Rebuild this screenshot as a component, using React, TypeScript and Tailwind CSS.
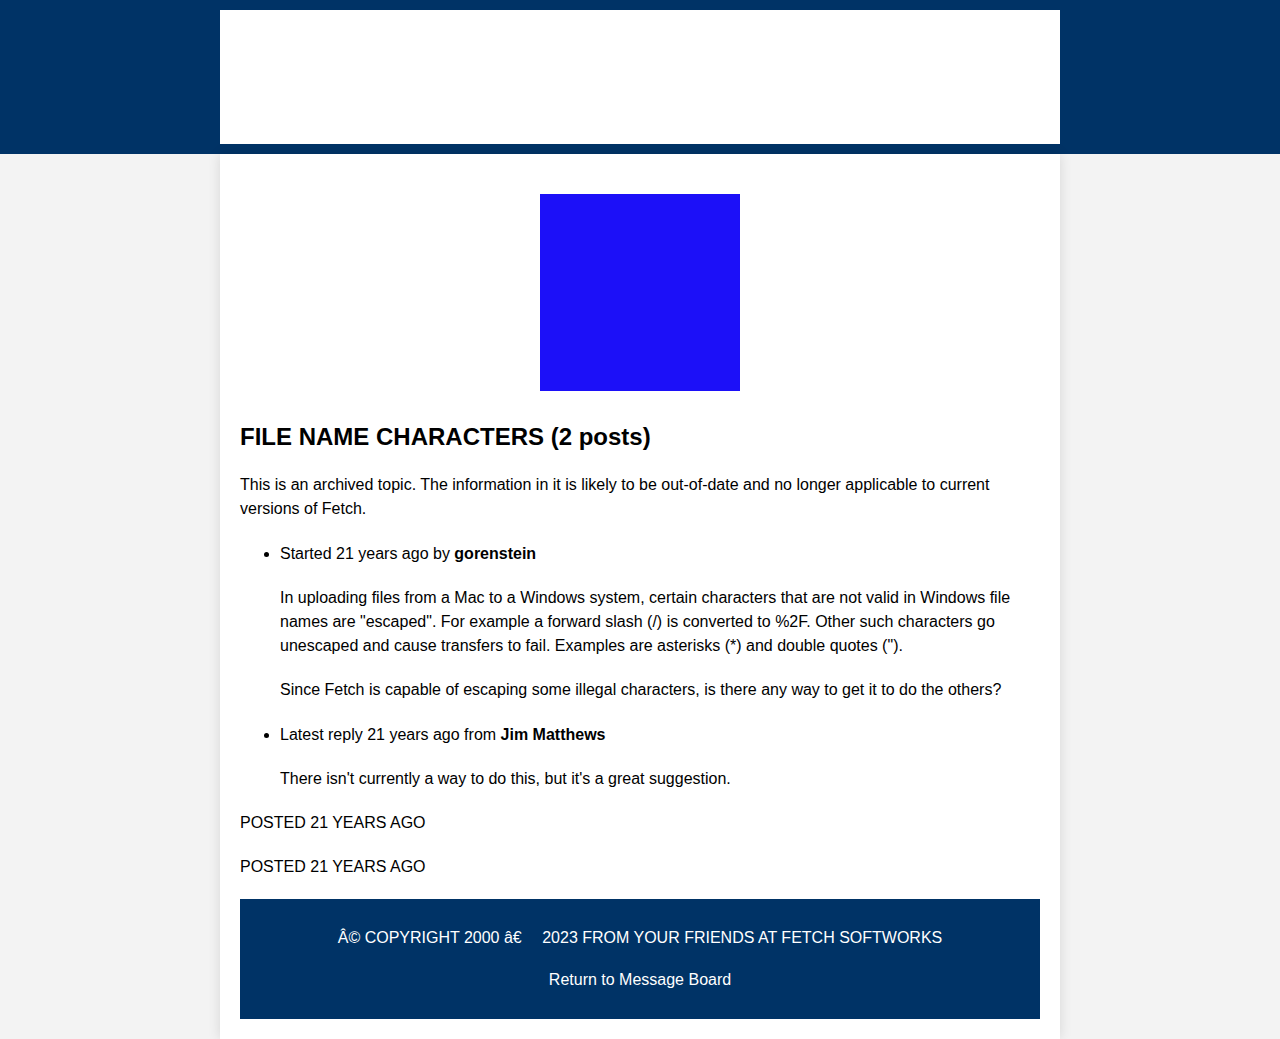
export default function App() {
  return (
    <div className="min-h-screen bg-[#f3f3f3] text-black font-['Liberation_Sans',Arial,sans-serif] text-base leading-6">
      {/* Header */}
      <header className="bg-[#003366] py-[10px]">
        <div className="mx-auto h-[134px] w-[840px] bg-white" />
      </header>

      {/* Topic */}
      <main className="mx-auto w-[840px] bg-white px-5 pt-10 pb-5 shadow-[0_0_12px_rgba(0,0,0,0.12)]">
        <div className="mx-auto h-[197px] w-[200px] bg-[#1c10f8]" />

        <h2 className="mt-[28px] text-2xl font-bold leading-9">FILE NAME CHARACTERS (2 posts)</h2>

        <p className="mt-[18px]">
          This is an archived topic. The information in it is likely to be out-of-date and no longer applicable to current
          versions of Fetch.
        </p>

        <ul className="mt-[21px] list-disc pl-10">
          <li>
            Started 21 years ago by <strong>gorenstein</strong>
            <p className="mt-5">
              In uploading files from a Mac to a Windows system, certain characters that are not valid in Windows file
              names are "escaped". For example a forward slash (/) is converted to %2F. Other such characters go
              unescaped and cause transfers to fail. Examples are asterisks (*) and double quotes (").
            </p>
            <p className="mt-5">
              Since Fetch is capable of escaping some illegal characters, is there any way to get it to do the others?
            </p>
          </li>
          <li className="mt-[21px]">
            Latest reply 21 years ago from <strong>Jim Matthews</strong>
            <p className="mt-5">There isn't currently a way to do this, but it's a great suggestion.</p>
          </li>
        </ul>

        <p className="mt-5">POSTED 21 YEARS AGO</p>
        <p className="mt-5">POSTED 21 YEARS AGO</p>

        {/* Footer */}
        <footer className="mt-5 flex flex-col items-center gap-[18px] bg-[#003366] pt-[27px] pb-[27px] text-white">
          <p>Â© COPYRIGHT 2000 â€{'\u2003'} 2023 FROM YOUR FRIENDS AT FETCH SOFTWORKS</p>
          <a href="#">Return to Message Board</a>
        </footer>
      </main>
    </div>
  )
}
